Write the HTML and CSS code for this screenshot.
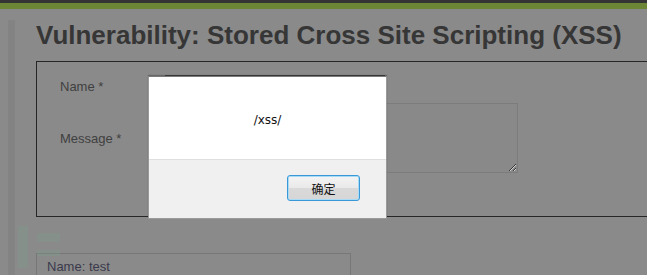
FILE: index.html
```html
<!DOCTYPE html>
<html lang="en">
<head>
  <meta charset="UTF-8">
  <title>Vulnerability: Stored Cross Site Scripting (XSS)</title>
  <link rel="stylesheet" href="styles.css">
</head>
<body>
  <header class="topbar"></header>
  <div class="main">
    <h1>Vulnerability: Stored Cross Site Scripting (XSS)</h1>
    <div class="form-box">
      <form class="guestbook">
        <label for="txtName">Name *</label>
        <input type="text" id="txtName" class="field-name">
        <label for="mtxMessage">Message *</label>
        <textarea id="mtxMessage" class="field-message"></textarea>
        <span></span>
        <button type="button" class="sign">Sign Guestbook</button>
      </form>
    </div>
    <div class="entry">Name: test</div>
  </div>

  <div class="watermark">
    <span class="wm-bar"></span>
    <span class="wm-top"></span>
    <span class="wm-mid"></span>
  </div>

  <div class="dialog">
    <div class="dialog-body">/xss/</div>
    <div class="dialog-foot">
      <button type="button" class="ok">确定</button>
    </div>
  </div>
</body>
</html>
```

FILE: styles.css
```css
html {
  overflow: hidden;
}
body {
  margin: 0;
  padding: 0;
  background: #8a8a8a;
  font-family: "Liberation Sans", Arial, sans-serif;
  color: #3a3a3a;
}
.topbar {
  height: 3px;
  background: #343434;
  border-bottom: 6px solid #6b8634;
}
.main {
  margin-left: 8px;
  border-left: 7px solid #838383;
  padding-left: 21px;
  min-height: 300px;
}
h1 {
  margin: 11px 0 10px;
  font-size: 26px;
  line-height: 31px;
  font-weight: bold;
  color: #363636;
  white-space: nowrap;
}
.form-box {
  width: 660px;
  height: 141px;
  border: 1px solid #262626;
  padding: 13px 0 0 23px;
}
.guestbook {
  display: grid;
  grid-template-columns: 105px auto;
  row-gap: 6px;
  align-items: center;
  justify-items: start;
}
label {
  font-size: 13px;
  color: #404040;
}
.field-name {
  width: 218px;
  height: 20px;
  padding: 0;
  border: 1px solid #4a4a4a;
  background: #8a8a8a;
}
.field-message {
  width: 351px;
  height: 68px;
  padding: 0;
  border: 1px solid #7c7c7c;
  background: #898989;
  resize: both;
}
.sign {
  margin-top: 2px;
  height: 22px;
  font-size: 12px;
}
.entry {
  margin-top: 36px;
  width: 303px;
  height: 40px;
  border: 1px solid #777;
  padding: 5px 0 0 10px;
  font-size: 13px;
  color: #3b3a4c;
}

.watermark span {
  position: absolute;
  background: #7d9a8b;
  opacity: 0.35;
}
.wm-bar {
  left: 18px;
  top: 226px;
  width: 10px;
  height: 42px;
}
.wm-top {
  left: 37px;
  top: 233px;
  width: 23px;
  height: 9px;
}
.wm-mid {
  left: 37px;
  top: 250px;
  width: 23px;
  height: 6px;
}

.dialog {
  position: absolute;
  left: 148px;
  top: 76px;
  width: 237px;
  height: 141px;
  border: 1px solid #9a9a9a;
  border-top-color: #7a7a7a;
  background: #f0f0f0;
  box-shadow: 0 -1px 1px rgba(0, 0, 0, 0.25);
  font-family: "DejaVu Sans", Tahoma, sans-serif;
}
.dialog-body {
  height: 83px;
  background: #fff;
  border-bottom: 1px solid #dfdfdf;
  display: flex;
  align-items: center;
  justify-content: center;
  font-size: 12px;
  color: #111;
  padding-top: 3px;
  box-sizing: border-box;
}
.dialog-foot {
  display: flex;
  justify-content: flex-end;
  padding: 15px 26px 0 0;
}
.ok {
  width: 73px;
  height: 26px;
  border: 1px solid #3a98d8;
  border-radius: 3px;
  box-shadow: inset 0 0 0 1px #a8dcf6;
  background: linear-gradient(#f4f4f4, #e9e9e9 50%, #d9d9d9 51%, #d6d6d6);
  font-family: "Noto Sans CJK SC", sans-serif;
  font-size: 12px;
  color: #111;
  padding: 0;
}
```
